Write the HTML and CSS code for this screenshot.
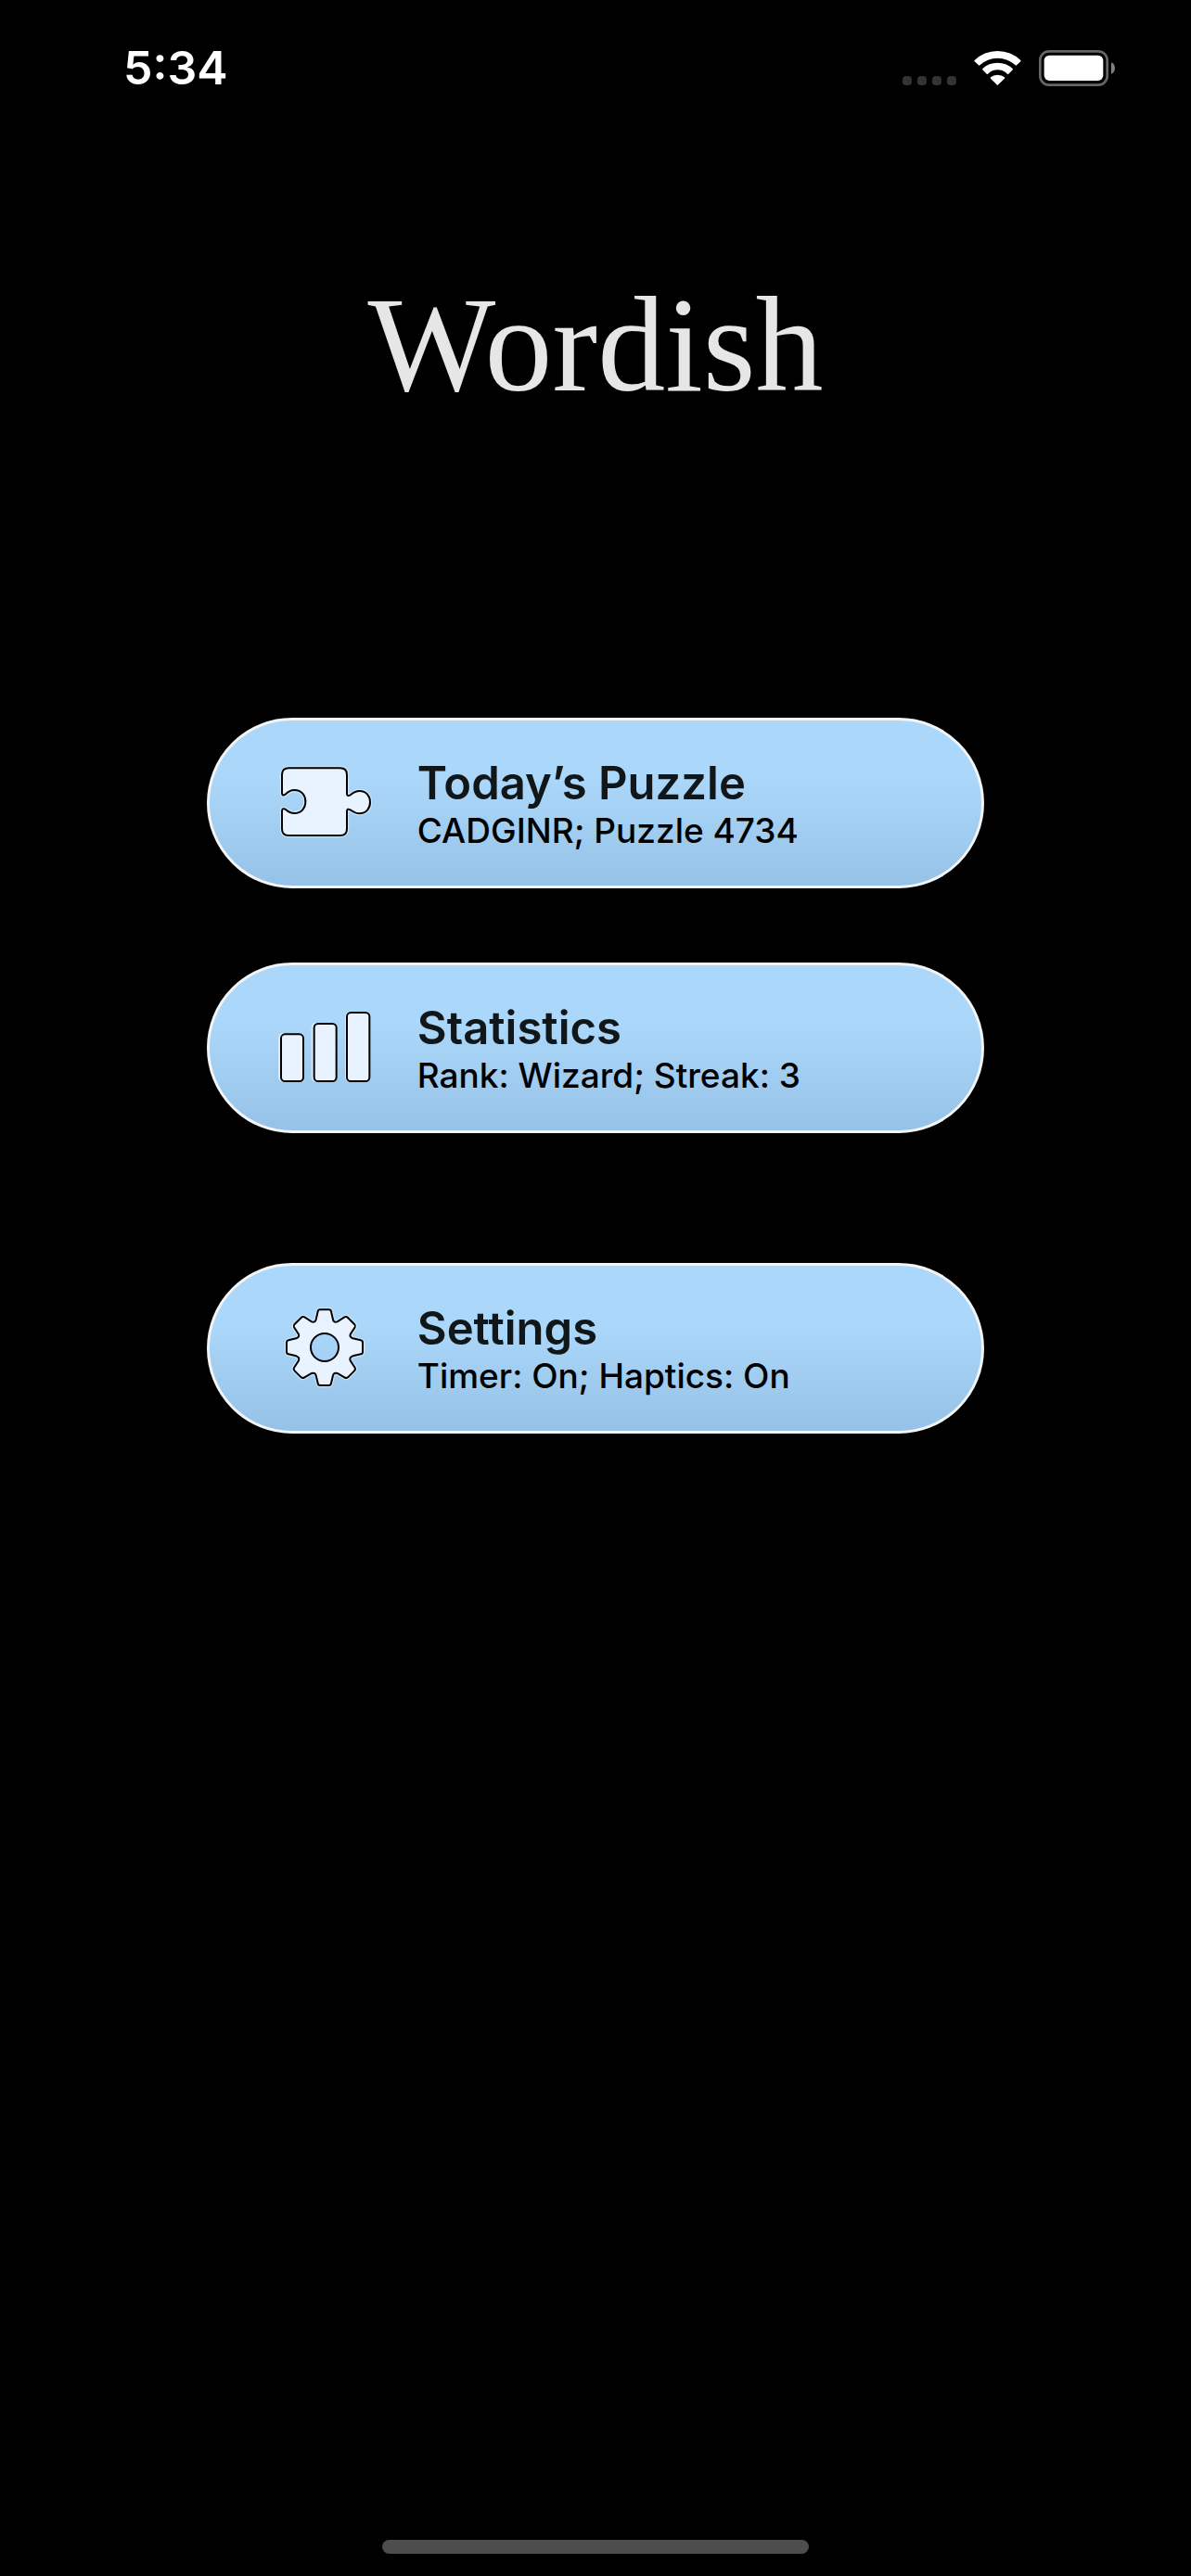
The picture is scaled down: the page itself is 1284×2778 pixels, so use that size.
FILE: index.html
```
<!DOCTYPE html>
<html lang="en">
<head>
<meta charset="utf-8">
<meta name="viewport" content="width=device-width, initial-scale=1">
<title>Wordish</title>
<link rel="stylesheet" href="styles.css">
</head>
<body>
<div class="screen">
  <header class="status-bar">
    <time class="clock">5:34</time>
    <div class="indicators">
      <div class="signal"><span class="dot"></span><span class="dot"></span><span class="dot"></span><span class="dot"></span></div>
      <svg class="wifi" viewBox="300 69 153 117" aria-hidden="true">
        <path d="M376 183 L354 161 Q352 159 354 157 Q363 149 376 149 Q390 149 399 157 Q401 159 399 161Z"/>
        <path d="M328 133 Q326 131 328 129 Q348 110 376 110 Q405 110 425 129 Q427 131 425 133 L412 146 Q410 148 408 146 Q395 133 376 133 Q358 133 345 146 Q343 148 341 146Z"/>
        <path d="M302 106 Q300 104 302 102 Q333 72 376 72 Q420 72 451 102 Q453 104 451 106 L438 118 Q436 120 434 118 Q410 95 376 95 Q343 95 319 118 Q317 120 315 118Z"/>
      </svg>
      <svg class="battery" viewBox="510 69 249 117" aria-hidden="true">
        <rect class="battery-case" x="514" y="73" width="217" height="109" rx="29"/>
        <rect x="527" y="86" width="191" height="82" rx="17"/>
        <path class="battery-cap" d="M744 109 C760 115 760 140 744 147Z"/>
      </svg>
    </div>
  </header>

  <main class="home">
    <h1 class="logo">Wordish</h1>
    <nav class="menu">
      <button class="card" type="button">
        <svg class="icon" viewBox="264 174 312 288" aria-hidden="true">
          <path class="halo" d="M304 205 H470 Q492 205 492 227 V287 Q492 298 503 292 C512 285 519 279 532 279 C555 279 567 296 567 315 C567 335 555 352 532 352 C519 352 512 346 503 340 Q492 334 492 345 V401 Q492 423 470 423 H304 Q282 423 282 401 V344 Q282 333 293 338 C301 345 309 351 322 351 C345 351 358 334 358 313 C358 293 345 276 322 276 C309 276 301 282 293 290 Q282 297 282 286 V227 Q282 205 304 205Z"/>
          <path class="shape" d="M304 205 H470 Q492 205 492 227 V287 Q492 298 503 292 C512 285 519 279 532 279 C555 279 567 296 567 315 C567 335 555 352 532 352 C519 352 512 346 503 340 Q492 334 492 345 V401 Q492 423 470 423 H304 Q282 423 282 401 V344 Q282 333 293 338 C301 345 309 351 322 351 C345 351 358 334 358 313 C358 293 345 276 322 276 C309 276 301 282 293 290 Q282 297 282 286 V227 Q282 205 304 205Z"/>
        </svg>
        <span class="label"><span class="title">Today’s Puzzle</span><span class="detail">CADGINR; Puzzle 4734</span></span>
      </button>
      <button class="card" type="button">
        <svg class="icon" viewBox="264 168 312 288" aria-hidden="true">
          <path class="bar-halo" d="M285 264 Q270 264 270 282 V405 Q270 422 285 422Z M393 230 Q377 230 377 247 V405 Q377 422 393 422Z M501 194 Q486 194 486 212 V405 Q486 422 501 422Z"/>
          <rect class="shape" x="279" y="268" width="72" height="152" rx="13"/>
          <rect class="shape" x="386" y="234" width="72" height="186" rx="13"/>
          <rect class="shape" x="492" y="198" width="73" height="222" rx="13"/>
        </svg>
        <span class="label"><span class="title">Statistics</span><span class="detail">Rank: Wizard; Streak: 3</span></span>
      </button>
      <button class="card card-settings" type="button">
        <svg class="icon" viewBox="264 168 312 288" aria-hidden="true">
          <path class="halo" d="M405 187 H434 Q440 187 441 193 L447 219 Q449 230 461 226 L484 211 Q490 208 495 213 L516 234 Q521 239 518 244 L503 267 Q500 276 511 280 L537 286 Q543 287 543 294 V324 Q543 330 537 331 L511 337 Q499 341 503 352 L518 375 Q521 380 516 385 L495 406 Q490 410 484 406 L461 393 Q450 389 447 400 L441 425 Q440 432 434 432 H405 Q399 432 398 425 L392 400 Q389 389 378 393 L355 406 Q349 410 344 406 L323 385 Q318 380 321 375 L336 352 Q340 341 328 337 L303 331 Q297 330 297 324 V294 Q297 287 303 286 L328 280 Q339 276 336 267 L321 244 Q318 239 323 234 L344 213 Q349 208 355 211 L378 226 Q389 230 392 219 L398 193 Q399 187 405 187Z"/>
          <path class="shape" fill-rule="evenodd" d="M405 187 H434 Q440 187 441 193 L447 219 Q449 230 461 226 L484 211 Q490 208 495 213 L516 234 Q521 239 518 244 L503 267 Q500 276 511 280 L537 286 Q543 287 543 294 V324 Q543 330 537 331 L511 337 Q499 341 503 352 L518 375 Q521 380 516 385 L495 406 Q490 410 484 406 L461 393 Q450 389 447 400 L441 425 Q440 432 434 432 H405 Q399 432 398 425 L392 400 Q389 389 378 393 L355 406 Q349 410 344 406 L323 385 Q318 380 321 375 L336 352 Q340 341 328 337 L303 331 Q297 330 297 324 V294 Q297 287 303 286 L328 280 Q339 276 336 267 L321 244 Q318 239 323 234 L344 213 Q349 208 355 211 L378 226 Q389 230 392 219 L398 193 Q399 187 405 187Z M465 309 A45 45 0 1 0 375 309 A45 45 0 1 0 465 309Z"/>
        </svg>
        <span class="label"><span class="title">Settings</span><span class="detail">Timer: On; Haptics: On</span></span>
      </button>
    </nav>
  </main>

  <footer class="home-area"><div class="home-indicator"></div></footer>
</div>
</body>
</html>
```
FILE: styles.css
```
* {
  box-sizing: border-box;
}

body {
  margin: 0;
  background: #000;
  color: #fff;
  font-family: Inter, "Liberation Sans", sans-serif;
}

.screen {
  display: flex;
  flex-direction: column;
  min-height: 100vh;
}

/* Status bar */
.status-bar {
  display: flex;
  justify-content: space-between;
  align-items: center;
  height: 146px;
  padding: 0 81px 0 133px;
}

.clock {
  font-size: 50px;
  line-height: 60px;
  font-weight: 600;
}

.indicators {
  display: flex;
  align-items: flex-end;
  gap: 19px;
}

.signal {
  display: flex;
  gap: 6px;
  padding-bottom: 1px;
}

.dot {
  width: 10px;
  height: 10px;
  border-radius: 4px;
  background: #333;
}

.wifi {
  width: 51px;
  height: 39px;
  fill: #fff;
}

.battery {
  width: 83px;
  height: 39px;
  fill: #fff;
}

.battery-case {
  fill: none;
  stroke: #666;
  stroke-width: 8;
}

.battery .battery-cap {
  fill: #808080;
}

/* Home screen */
.home {
  flex: 1;
  display: flex;
  flex-direction: column;
  align-items: center;
}

.logo {
  margin: 146px 0 0;
  color: #e6e6e6;
  font-family: "Liberation Serif", serif;
  font-size: 146px;
  line-height: 160px;
  font-weight: 400;
}

.menu {
  display: flex;
  flex-direction: column;
  gap: 80px;
  width: 65.3%;
  margin-top: 322px;
}

.card {
  display: flex;
  align-items: center;
  gap: 48px;
  min-height: 184px;
  padding: 0 72px;
  border: 3px solid #f2f4f6;
  border-radius: 92px;
  background: linear-gradient(#abd7fa 0%, #abd7fa 35%, #95c2e6 100%);
  color: #000;
  font-family: inherit;
  text-align: left;
}

.card-settings {
  margin-top: 60px;
}

.icon {
  flex: none;
  width: 104px;
  height: 96px;
}

.halo {
  fill: none;
  stroke: #e8f3ff;
  stroke-width: 13;
  opacity: 0.6;
}

.bar-halo {
  fill: #d5eafd;
}

.shape {
  fill: #e8f3ff;
  stroke: #000;
  stroke-width: 6;
}

.label {
  display: flex;
  flex-direction: column;
}

.title {
  color: #111618;
  font-size: 49px;
  line-height: 60px;
  font-weight: 600;
}

.detail {
  font-size: 37px;
  line-height: 42px;
  font-weight: 500;
}

.home-area {
  display: flex;
  justify-content: center;
  padding-bottom: 24px;
}

.home-indicator {
  width: 35.8%;
  height: 15px;
  border-radius: 8px;
  background: #4d4d4d;
}
```
